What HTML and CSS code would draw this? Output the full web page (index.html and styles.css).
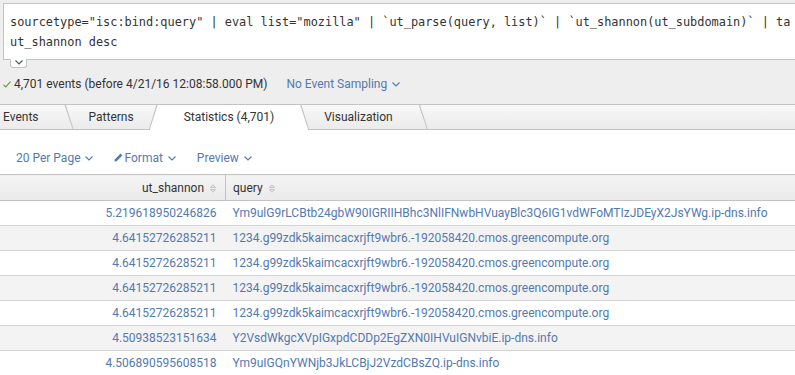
FILE: index.html
```html
<!DOCTYPE html>
<html>
	<head>
		<meta charset="utf-8" />
		<title>Search</title>
		<link rel="stylesheet" href="styles.css">
	</head>
	<body>
		<div class="search-area">
			<div class="search-box">
				<div class="search-line">sourcetype="isc:bind:query" | eval list="mozilla" | `ut_parse(query, list)` | `ut_shannon(ut_subdomain)` | ta</div>
				<div class="search-line">ut_shannon desc</div>
			</div>
			<div class="expand-toggle">
				<svg width="8" height="5" viewBox="0 0 8 5"><path d="M0.5 0.5 L4 4 L7.5 0.5" fill="none" stroke="#555" stroke-width="1.1"/></svg>
			</div>
			<div class="status-bar">
				<svg class="check" width="8" height="7" viewBox="0 0 8 7"><path d="M0.5 3.8 L2.8 6 L7.5 0.6" fill="none" stroke="#65a637" stroke-width="1.2"/></svg>
				<span class="status-text">4,701 events (before 4/21/16 12:08:58.000 PM)</span>
				<a class="link sampling">No Event Sampling
					<svg class="chev" width="8" height="5" viewBox="0 0 8 5"><path d="M0.5 0.5 L4 4 L7.5 0.5" fill="none" stroke="#5379af" stroke-width="1.1"/></svg>
				</a>
			</div>
		</div>
		<ul class="tabs">
			<li class="tab tab-events">Events</li>
			<li class="tab tab-patterns">Patterns</li>
			<li class="tab tab-active">Statistics (4,701)</li>
			<li class="tab tab-viz">Visualization</li>
		</ul>
		<div class="results-toolbar">
			<a class="link">20 Per Page
				<svg class="chev" width="8" height="5" viewBox="0 0 8 5"><path d="M0.5 0.5 L4 4 L7.5 0.5" fill="none" stroke="#5379af" stroke-width="1.1"/></svg>
			</a>
			<a class="link">
				<svg class="pencil" width="9" height="9" viewBox="0 0 9 9"><path d="M6.6 0.6 L8.4 2.4 L2.6 8.2 L0.4 8.6 L0.8 6.4 Z" fill="#5379af"/></svg>Format
				<svg class="chev" width="8" height="5" viewBox="0 0 8 5"><path d="M0.5 0.5 L4 4 L7.5 0.5" fill="none" stroke="#5379af" stroke-width="1.1"/></svg>
			</a>
			<a class="link">Preview
				<svg class="chev" width="8" height="5" viewBox="0 0 8 5"><path d="M0.5 0.5 L4 4 L7.5 0.5" fill="none" stroke="#5379af" stroke-width="1.1"/></svg>
			</a>
		</div>
		<table class="results-table">
			<thead>
				<tr>
					<th class="col-num">ut_shannon <svg class="sort" width="6" height="9" viewBox="0 0 6 9"><path d="M0.6 3.4 L3 0.8 L5.4 3.4 Z M0.6 5.6 L3 8.2 L5.4 5.6 Z" fill="none" stroke="#b5b5b5" stroke-width="0.8"/></svg></th>
					<th class="col-query">query <svg class="sort" width="6" height="9" viewBox="0 0 6 9"><path d="M0.6 3.4 L3 0.8 L5.4 3.4 Z M0.6 5.6 L3 8.2 L5.4 5.6 Z" fill="none" stroke="#b5b5b5" stroke-width="0.8"/></svg></th>
				</tr>
			</thead>
			<tbody>
				<tr><td class="col-num">5.219618950246826</td><td class="col-query">Ym9ulG9rLCBtb24gbW90IGRIIHBhc3NlIFNwbHVuayBlc3Q6IG1vdWFoMTIzJDEyX2JsYWg.ip-dns.info</td></tr>
				<tr><td class="col-num">4.64152726285211</td><td class="col-query">1234.g99zdk5kaimcacxrjft9wbr6.-192058420.cmos.greencompute.org</td></tr>
				<tr><td class="col-num">4.64152726285211</td><td class="col-query">1234.g99zdk5kaimcacxrjft9wbr6.-192058420.cmos.greencompute.org</td></tr>
				<tr><td class="col-num">4.64152726285211</td><td class="col-query">1234.g99zdk5kaimcacxrjft9wbr6.-192058420.cmos.greencompute.org</td></tr>
				<tr><td class="col-num">4.64152726285211</td><td class="col-query">1234.g99zdk5kaimcacxrjft9wbr6.-192058420.cmos.greencompute.org</td></tr>
				<tr><td class="col-num">4.50938523151634</td><td class="col-query">Y2VsdWkgcXVpIGxpdCDDp2EgZXN0IHVuIGNvbiE.ip-dns.info</td></tr>
				<tr><td class="col-num">4.506890595608518</td><td class="col-query">Ym9uIGQnYWNjb3JkLCBjJ2VzdCBsZQ.ip-dns.info</td></tr>
			</tbody>
		</table>
	</body>
</html>
```

FILE: styles.css
```css
body {
	margin: 0px;
	font-family: Roboto, "Liberation Sans", sans-serif;
	font-size: 12px;
	color: #333;
	background-color: white;
	overflow: hidden;
}

.link {
	color: #5379af;
	text-decoration: none;
	white-space: nowrap;
}

.chev {
	margin-left: 2px;
	vertical-align: 1px;
}

.search-area {
	background-color: #eeeeee;
	padding-top: 3px;
	padding-left: 3px;
	padding-bottom: 10px;
}

.search-box {
	background-color: white;
	border: 1px solid #c3c3c3;
	border-right: none;
	padding: 8px 0px 7px 6px;
	font-family: "DejaVu Sans Mono", monospace;
	font-size: 11.9px;
	color: #333;
	overflow: hidden;
}

.search-line {
	line-height: 20px;
	white-space: pre;
}

.expand-toggle {
	width: 15px;
	height: 7px;
	margin-left: 7px;
	margin-top: -1px;
	background-color: white;
	border: 1px solid #c3c3c3;
	border-top: none;
	border-radius: 0px 0px 3px 3px;
	display: flex;
	justify-content: center;
	align-items: flex-start;
	padding-top: 1px;
}

.status-bar {
	display: flex;
	align-items: center;
	height: 20px;
	margin-top: 6px;
}

.status-bar .check {
	margin-right: 3px;
}

.status-text {
	margin-right: 19px;
}

.tabs {
	display: flex;
	list-style: none;
	margin: 0px;
	padding: 0px;
	height: 24px;
	border-top: 1px solid #c3c3c3;
	border-bottom: 1px solid #c3c3c3;
	background: linear-gradient(#f8f8f8, #ebebeb);
}

.tab {
	position: relative;
	padding: 0px 35px;
	margin-left: -20px;
	line-height: 24px;
	color: #333;
	white-space: nowrap;
}

.tab::before,
.tab::after {
	content: "";
	position: absolute;
	z-index: -1;
	clip-path: polygon(8px 0px, calc(100% - 8px) 0px, 100% 100%, 0px 100%);
}

.tab::before {
	top: -1px;
	bottom: 0px;
	left: 0px;
	right: 0px;
	background-color: #c3c3c3;
}

.tab::after {
	top: 0px;
	bottom: 0px;
	left: 1px;
	right: 1px;
	background: linear-gradient(#f8f8f8, #ebebeb);
}

.tab-events {
	margin-left: -32px;
	z-index: 4;
}

.tab-patterns {
	z-index: 3;
}

.tab-active {
	z-index: 10;
}

.tab-active::before {
	bottom: -1px;
}

.tab-active::after {
	bottom: -1px;
	background: white;
}

.tab-viz {
	z-index: 1;
}

.results-toolbar {
	display: flex;
	gap: 21px;
	align-items: center;
	height: 20px;
	margin-top: 18px;
	margin-bottom: 6px;
	padding-left: 16px;
}

.pencil {
	margin-right: 1px;
	vertical-align: 0px;
}

.results-table {
	width: 100%;
	border-collapse: collapse;
}

.results-table th {
	height: 25px;
	padding: 0px;
	font-weight: normal;
	color: #333;
	background: linear-gradient(#f4f4f4, #eaeaea);
	border-top: 1px solid #c3c3c3;
	border-bottom: 1px solid #c3c3c3;
}

.results-table th.col-num {
	border-right: 1px solid #c3c3c3;
}

.results-table td {
	height: 24px;
	padding: 0px;
	color: #5379af;
	border-bottom: 1px solid #d5d5d5;
	white-space: nowrap;
}

.results-table tbody tr:nth-child(even) td {
	background-color: #f3f3f3;
}

.col-num {
	width: 216px;
	text-align: right;
	padding-right: 9px !important;
}

.col-query {
	text-align: left;
	padding-left: 7px !important;
}

.sort {
	margin-left: 3px;
	vertical-align: -1px;
}
```
